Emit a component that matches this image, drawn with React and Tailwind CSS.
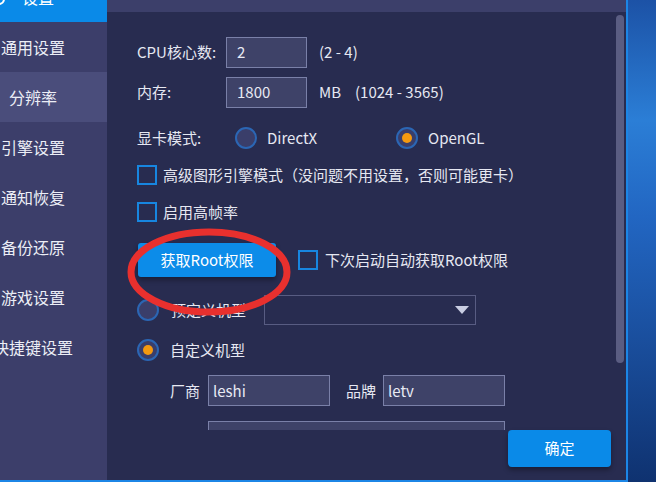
import React from 'react';

const font = { fontFamily: '"Noto Sans CJK SC", "Noto Sans", sans-serif' };

// 侧边栏菜单
const menu = [
  { label: '通用设置' },
  { label: '分辨率', sub: true },
  { label: '引擎设置' },
  { label: '通知恢复' },
  { label: '备份还原' },
  { label: '游戏设置' },
  { label: '快捷键设置' },
];

function Radio({ checked }) {
  return (
    <div className="w-[22px] h-[22px] shrink-0 rounded-full border-2 border-[#2b66b4] bg-[#3a3e6a] flex items-center justify-center">
      {checked && <div className="w-[10px] h-[10px] rounded-full bg-[#f59a10]" />}
    </div>
  );
}

function Checkbox() {
  return <div className="w-[20px] h-[20px] shrink-0 border-2 border-[#1786e0]" />;
}

function Input({ value, className }) {
  return (
    <div className={`h-[31px] bg-[#3e4268] border border-[#7a80a8] flex items-center text-[15px] text-[#e8eaf4] ${className}`}>
      {value}
    </div>
  );
}

export default function App() {
  return (
    <div className="w-[656px] h-[482px] flex overflow-hidden bg-[#0e2e66] text-[#e6e8f2]" style={font}>
      {/* 窗口 */}
      <div className="flex h-[482px] border-b-2 border-[#1c86e6]">
        {/* Sidebar */}
        <div className="w-[107px] h-full bg-[#3c3e6a] flex flex-col">
          <div className="h-[22px] bg-[#0a8ae8] relative overflow-hidden">
            <svg className="absolute -left-[8px] -top-[8px]" width="14" height="14" viewBox="0 0 14 14">
              <circle cx="7" cy="7" r="5" fill="none" stroke="#fff" strokeWidth="2" />
            </svg>
            <div className="absolute left-[22px] -top-[11px] text-[16px] leading-[16px] text-white">设置</div>
          </div>
          {menu.map((m) => (
            <div
              key={m.label}
              className={`h-[50px] flex items-center ${m.sub ? 'bg-[#4a4d7b]' : ''}`}
            >
              <div className="w-[66px] flex justify-center whitespace-nowrap text-[16px] leading-[20px] text-[#eceef6]">
                {m.label}
              </div>
            </div>
          ))}
        </div>

        {/* Main */}
        <div className="w-[521px] h-full bg-[#282c50] border-r-2 border-[#1c86e6] flex flex-col">
          <div className="h-[12px] bg-[#3c3f6a] shrink-0" />
          <div className="h-[418px] relative overflow-hidden pl-[30px] pt-[25px] text-[15px] leading-[20px]">
            <div className="absolute right-[2px] top-[3px] w-[8px] h-[348px] rounded-full bg-[#5a5d82]" />

            <div className="flex items-center h-[30px]">
              <div className="w-[89px]">CPU核心数:</div>
              <Input value="2" className="w-[81px] h-[30px] pl-[10px]" />
              <div className="ml-[12px]">(2 - 4)</div>
            </div>

            <div className="flex items-center h-[30px] mt-[10px]">
              <div className="w-[89px]">内存:</div>
              <Input value="1800" className="w-[81px] h-[30px] pl-[10px]" />
              <div className="ml-[12px]">MB</div>
              <div className="ml-[14px]">(1024 - 3565)</div>
            </div>

            <div className="flex items-center h-[22px] mt-[20px]">
              <div className="w-[98px]">显卡模式:</div>
              <Radio />
              <div className="ml-[10px] w-[129px]">DirectX</div>
              <Radio checked />
              <div className="ml-[10px]">OpenGL</div>
            </div>

            <div className="flex items-center h-[20px] mt-[16px]">
              <Checkbox />
              <div className="ml-[6px]">高级图形引擎模式（没问题不用设置，否则可能更卡）</div>
            </div>

            <div className="flex items-center h-[20px] mt-[17px]">
              <Checkbox />
              <div className="ml-[6px]">启用高帧率</div>
            </div>

            <div className="flex items-center h-[34px] mt-[21px]">
              <button className="w-[138px] h-[34px] ml-[1px] rounded-[3px] bg-[#0c8ce9] text-white text-[15px] shadow-[0_3px_5px_rgba(0,0,0,0.35)]">
                获取Root权限
              </button>
              <div className="ml-[22px] flex items-center">
                <Checkbox />
                <div className="ml-[7px]">下次启动自动获取Root权限</div>
              </div>
            </div>

            <div className="flex items-center h-[30px] mt-[18px]">
              <Radio />
              <div className="ml-[12px] w-[93px]">预定义机型</div>
              <div className="w-[212px] h-[30px] border border-[#585c82] flex items-center justify-end pr-[6px]">
                <svg width="14" height="8" viewBox="0 0 14 8">
                  <path d="M0 0h14L7 8z" fill="#c9cde2" />
                </svg>
              </div>
            </div>

            <div className="flex items-center h-[22px] mt-[14px]">
              <Radio checked />
              <div className="ml-[11px]">自定义机型</div>
            </div>

            <div className="flex items-center h-[31px] mt-[14px] pl-[33px]">
              <div className="w-[38px]">厂商</div>
              <Input value="leshi" className="w-[122px] pl-[4px]" />
              <div className="ml-[16px] w-[37px]">品牌</div>
              <Input value="letv" className="w-[122px] pl-[4px]" />
            </div>

            <div className="ml-[71px] mt-[15px] w-[297px] h-[31px] bg-[#3e4268] border border-[#7a80a8]" />

            {/* 红色标注圈 */}
            <svg className="absolute left-[20px] top-[212px]" width="170" height="96" viewBox="0 0 170 96">
              <ellipse cx="82" cy="48" rx="78" ry="40" fill="none" stroke="#e8302e" strokeWidth="7" />
            </svg>
          </div>
          <div className="flex-1 flex justify-end pr-[15px]">
            <button className="w-[103px] h-[37px] rounded-[4px] bg-[#0a8ae8] text-white text-[15px] shadow-[0_3px_5px_rgba(0,0,0,0.35)]">
              确定
            </button>
          </div>
        </div>
      </div>

      {/* 桌面壁纸 */}
      <div className="w-[28px] h-full bg-[linear-gradient(180deg,#1c52a6_0%,#2b7ed6_25%,#2266c2_45%,#1a4f9e_70%,#0f3270_100%)]" />
    </div>
  );
}
